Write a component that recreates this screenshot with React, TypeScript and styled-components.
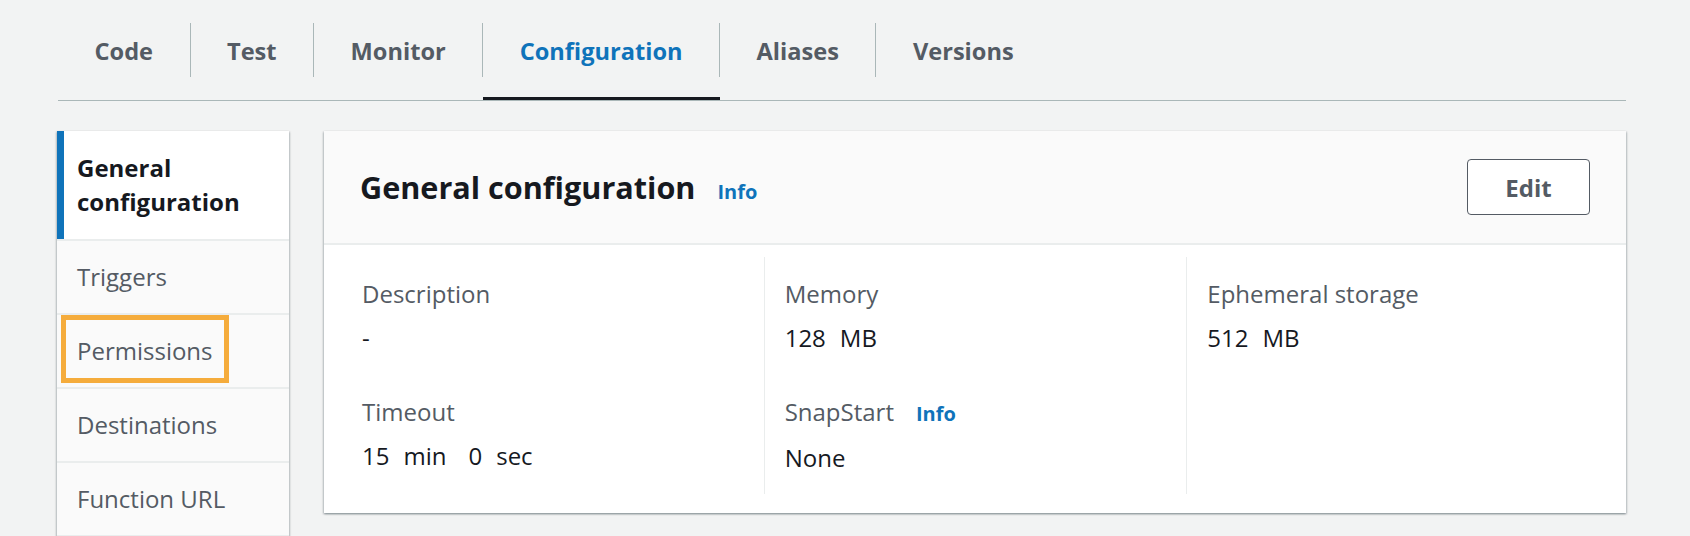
import React from "react";
import styled, { createGlobalStyle, css } from "styled-components";

const GlobalStyle = createGlobalStyle`
  html, body {
    margin: 0;
    padding: 0;
    background: #f2f3f3;
    font-family: "Open Sans", "Noto Sans", Arial, sans-serif;
    color: #16191f;
  }
  * { box-sizing: border-box; }
`;

const Page = styled.div`
  padding: 0 64px 0 57px;
`;

const TabBar = styled.div`
  display: flex;
  margin-left: 1px;
  padding-top: 23px;
  border-bottom: 1px solid #aab7b8;
`;

const Tab = styled.div<{ $active?: boolean }>`
  display: flex;
  flex-direction: column;
  padding-bottom: 20px;
  border-bottom: 3px solid ${(p) => (p.$active ? "#16191f" : "transparent")};
`;

const TabLabel = styled.div<{ $active?: boolean; $last?: boolean }>`
  height: 54px;
  display: flex;
  align-items: center;
  padding: 2px 36.5px 0 36.5px;
  border-right: 1px solid ${(p) => (p.$last ? "transparent" : "#aab7b8")};
  font-size: 23.6px;
  font-weight: 700;
  color: ${(p) => (p.$active ? "#0f73ba" : "#545b64")};
  white-space: nowrap;
`;

const Main = styled.div`
  display: flex;
  align-items: flex-start;
  gap: 35px;
  margin-top: 30px;
`;

const SideNav = styled.nav`
  width: 232px;
  flex: none;
  display: flex;
  flex-direction: column;
  gap: 2px;
  background: #eaeded;
  padding-bottom: 2px;
  box-shadow: 0 1px 2px 0 rgba(0, 28, 36, 0.3), 1px 1px 2px 0 rgba(0, 28, 36, 0.15),
    -1px 1px 2px 0 rgba(0, 28, 36, 0.15);
`;

const NavItem = styled.div<{ $selected?: boolean }>`
  position: relative;
  font-size: 24px;
  line-height: 34px;
  padding: 19px 16px 19px 20px;
  background: #fafafa;
  color: #545b64;
  ${(p) =>
    p.$selected &&
    css`
      background: #ffffff;
      color: #16191f;
      font-weight: 700;
      padding: 20px 16px 20px 13px;
      border-left: 7px solid #0f73ba;
    `}
`;

const Highlight = styled.span`
  position: absolute;
  left: 4px;
  top: 0;
  width: 168px;
  height: 68px;
  border: 5px solid #f5ac3c;
  pointer-events: none;
`;

const Card = styled.section`
  flex: 1;
  background: #ffffff;
  box-shadow: 0 1px 2px 0 rgba(0, 28, 36, 0.3), 1px 1px 2px 0 rgba(0, 28, 36, 0.15),
    -1px 1px 2px 0 rgba(0, 28, 36, 0.15);
`;

const CardHeader = styled.header`
  display: flex;
  align-items: center;
  justify-content: space-between;
  padding: 28px 36px 28px 36px;
  background: #fafafa;
  border-bottom: 2px solid #eaeded;
`;

const TitleGroup = styled.div`
  display: flex;
  align-items: baseline;
  gap: 22px;
`;

const Title = styled.h2`
  margin: 0;
  font-size: 30.6px;
  font-weight: 700;
  line-height: 40px;
  color: #16191f;
`;

const InfoLink = styled.a`
  font-size: 20px;
  font-weight: 700;
  color: #0f73ba;
  text-decoration: none;
  cursor: pointer;
`;

const Button = styled.button`
  width: 123px;
  height: 56px;
  border: 1px solid #545b64;
  border-radius: 4px;
  background: #ffffff;
  font-family: inherit;
  font-size: 24px;
  font-weight: 700;
  color: #545b64;
  cursor: pointer;
`;

const CardBody = styled.div`
  display: grid;
  grid-template-columns: repeat(3, 1fr);
  padding: 12px 17px 19px;
`;

const Column = styled.div<{ $divider?: boolean }>`
  display: flex;
  flex-direction: column;
  gap: 36px;
  padding: 18px 0 17px 20px;
  border-left: 1px solid ${(p) => (p.$divider ? "#eaeded" : "transparent")};
`;

const Pair = styled.div`
  display: flex;
  flex-direction: column;
`;

const Label = styled.div`
  display: flex;
  align-items: baseline;
  gap: 22px;
  font-size: 24px;
  line-height: 38px;
  color: #545b64;
  margin-bottom: 6px;
`;

const Value = styled.div`
  font-size: 24px;
  line-height: 38px;
  color: #16191f;
  white-space: pre;
`;

const Unit = styled.span`
  margin-left: 14px;
`;

const ValuePart = styled.span<{ $first?: boolean }>`
  margin-left: ${(p) => (p.$first ? 0 : 22)}px;
`;

const tabs = ["Code", "Test", "Monitor", "Configuration", "Aliases", "Versions"];
const navItems = ["General configuration", "Triggers", "Permissions", "Destinations", "Function URL"];

type Part = { n: string; u: string };
type Field = { label: string; value: Part[] | string; info?: boolean };
const columns: Field[][] = [
  [
    { label: "Description", value: "-" },
    {
      label: "Timeout",
      value: [
        { n: "15", u: "min" },
        { n: "0", u: "sec" },
      ],
    },
  ],
  [
    { label: "Memory", value: [{ n: "128", u: "MB" }] },
    { label: "SnapStart", value: "None", info: true },
  ],
  [{ label: "Ephemeral storage", value: [{ n: "512", u: "MB" }] }],
];

export default function App() {
  return (
    <>
      <GlobalStyle />
      <Page>
        <TabBar>
          {tabs.map((t, i) => (
            <Tab key={t} $active={t === "Configuration"}>
              <TabLabel $active={t === "Configuration"} $last={i === tabs.length - 1}>
                {t}
              </TabLabel>
            </Tab>
          ))}
        </TabBar>
        <Main>
          <SideNav>
            {navItems.map((n, i) => (
              <NavItem key={n} $selected={i === 0}>
                {i === 0 ? (
                  <>
                    General
                    <br />
                    configuration
                  </>
                ) : (
                  n
                )}
                {n === "Permissions" && <Highlight />}
              </NavItem>
            ))}
          </SideNav>
          <Card>
            <CardHeader>
              <TitleGroup>
                <Title>General configuration</Title>
                <InfoLink>Info</InfoLink>
              </TitleGroup>
              <Button>Edit</Button>
            </CardHeader>
            <CardBody>
              {columns.map((col, ci) => (
                <Column key={ci} $divider={ci > 0}>
                  {col.map((f) => (
                    <Pair key={f.label}>
                      <Label>
                        {f.label}
                        {f.info && <InfoLink>Info</InfoLink>}
                      </Label>
                      <Value>
                        {typeof f.value === "string"
                          ? f.value
                          : f.value.map((p, pi) => (
                              <ValuePart key={pi} $first={pi === 0}>
                                {p.n}
                                <Unit>{p.u}</Unit>
                              </ValuePart>
                            ))}
                      </Value>
                    </Pair>
                  ))}
                </Column>
              ))}
            </CardBody>
          </Card>
        </Main>
      </Page>
    </>
  );
}
